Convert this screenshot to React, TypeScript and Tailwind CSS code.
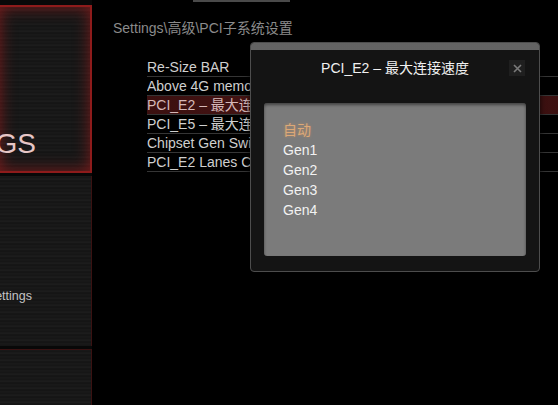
import React from 'react';

const rows = [
  'Re-Size BAR',
  'Above 4G memory/Crypto Currency mining',
  'PCI_E2 – 最大连接速度',
  'PCI_E5 – 最大连接速度',
  'Chipset Gen Switch',
  'PCI_E2 Lanes Configuration',
];

const options = ['自动', 'Gen1', 'Gen2', 'Gen3', 'Gen4'];

const streaks =
  'bg-[repeating-linear-gradient(180deg,#191919_0px,#151515_2px,#1f1f1f_3px,#131313_5px,#1b1b1b_7px)]';

export default function App() {
  return (
    <div
      className="w-[558px] h-[405px] overflow-hidden bg-black flex"
      style={{ fontFamily: '"Liberation Sans", "Noto Sans CJK SC", sans-serif' }}
    >
      {/* 左侧菜单 */}
      <div className="w-[92px] shrink-0 flex flex-col gap-[3px] pt-[5px] bg-[#080808]">
        <div
          className={`h-[168px] shrink-0 border-2 border-l-0 border-[#8e1b1b] shadow-[inset_0_0_16px_rgba(190,30,30,0.6)] ${streaks} flex items-end justify-end pr-[54px] pb-[13px] overflow-hidden`}
        >
          <span className="text-[28px] leading-none text-[#e6c6c6] whitespace-nowrap">SETTINGS</span>
        </div>
        <div
          className={`h-[170px] shrink-0 border-r border-[#3a1212] ${streaks} flex flex-col justify-end items-end pr-[59px] pb-[44px] overflow-hidden`}
        >
          <span className="text-[12.5px] leading-none text-[#c4c4c4] whitespace-nowrap">Settings</span>
        </div>
        <div className={`flex-1 border-t border-r border-[#3a1212] ${streaks}`} />
      </div>

      {/* 右侧内容 */}
      <div className="flex-1 relative">
        <div className="h-[2px] ml-[101px] w-[97px] bg-[#4a4a4a]" />
        <div className="pl-[21px] pt-[18px] text-[14px] leading-[16px] text-[#8b8b8b] whitespace-nowrap">
          Settings\高级\PCI子系统设置
        </div>
        <div className="mt-[22px] pl-[55px]">
          {rows.map((r, i) => (
            <div
              key={r}
              className={`h-[19px] border-b border-[#353535] text-[14px] leading-[19px] whitespace-nowrap overflow-hidden ${
                i === 2
                  ? 'bg-[linear-gradient(90deg,#3b1010,#501818_60%,#3b1010)] text-[#d6b8b8]'
                  : 'text-[#cfcfcf]'
              }`}
            >
              {r}
            </div>
          ))}
        </div>

        {/* 弹出对话框 */}
        <div className="absolute left-[158px] top-[42px] w-[290px] h-[230px] bg-[#141414] border border-[#4d4d4d] rounded-[4px] shadow-[0_0_6px_rgba(0,0,0,0.8)] flex flex-col overflow-hidden">
          <div className="h-[7px] shrink-0 bg-[radial-gradient(#666_0.7px,transparent_0.9px)] bg-[length:2px_2px] bg-[#222]" />
          <div className="relative h-[38px] shrink-0 flex items-center justify-center">
            <span className="text-[14px] text-[#f0f0f0] whitespace-nowrap -mt-[2px]">PCI_E2 – 最大连接速度</span>
            <div className="absolute right-[14px] top-[10px] w-[16px] h-[16px] bg-[#1f1f1f] flex items-center justify-center">
              <svg width="9" height="9" viewBox="0 0 9 9">
                <path d="M1 1L8 8M8 1L1 8" stroke="#7a7a7a" strokeWidth="1.6" />
              </svg>
            </div>
          </div>
          <div className="mx-[13px] mt-[15px] h-[153px] bg-[#7b7b7b] rounded-[3px] shadow-[inset_0_2px_3px_rgba(0,0,0,0.45)] pl-[19px] pt-[17px]">
            {options.map((o, i) => (
              <div
                key={o}
                className={`text-[14px] leading-[20px] ${
                  i === 0 ? 'text-[#dca877] [text-shadow:0_0_3px_rgba(220,150,90,0.6)]' : 'text-[#f2f2f2]'
                }`}
              >
                {o}
              </div>
            ))}
          </div>
        </div>
      </div>
    </div>
  );
}
